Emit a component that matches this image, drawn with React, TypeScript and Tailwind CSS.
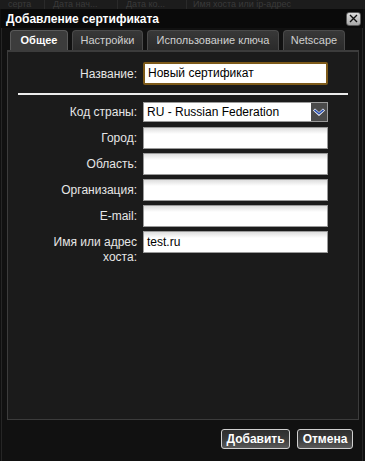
import React from 'react';

const font = { fontFamily: '"Liberation Sans", Arial, sans-serif' };

const inputClass =
  'h-[22px] w-[185px] border border-[#9a9a9a] bg-linear-to-b from-[#dedede] via-white via-[30%] to-white px-[3px] text-[12px] leading-[20px] text-black';

function Field({ label, value = '' }: { label: string; value?: string }) {
  return (
    <div className="flex items-center gap-[6px]">
      <span className="w-[117px] text-right text-[12px] text-[#e6e6e6]">{label}</span>
      <div className={inputClass}>{value}</div>
    </div>
  );
}

function Chevron() {
  return (
    <svg width="12" height="8" viewBox="0 0 12 8">
      <path d="M1 1.5 L6 6 L11 1.5" fill="none" stroke="#ffffff" strokeWidth="3" strokeLinejoin="miter" />
      <path d="M1.5 1.8 L6 5.8 L10.5 1.8" fill="none" stroke="#2a4fb0" strokeWidth="1.6" />
    </svg>
  );
}

export default function App() {
  const tabs = [
    { name: 'Общее', w: 'w-[58px]', active: true },
    { name: 'Настройки', w: 'w-[71px]' },
    { name: 'Использование ключа', w: 'w-[132px]' },
    { name: 'Netscape', w: 'w-[62px]' },
  ];

  return (
    <div className="relative w-[365px] h-[461px] overflow-hidden bg-[#101010]" style={font}>
      {/* table header behind the dialog */}
      <div className="absolute inset-x-0 top-0 flex h-[9px] overflow-hidden bg-[#1c1c1c] text-[9px] leading-[9px] text-[#3a3a3a]">
        <div className="w-[45px] border-r border-[#2a2a2a] pl-[8px]">серта</div>
        <div className="w-[73px] border-r border-[#2a2a2a] pl-[8px]">Дата нач...</div>
        <div className="w-[69px] border-r border-[#2a2a2a] pl-[8px]">Дата ко...</div>
        <div className="flex-1 pl-[6px]">Имя хоста или ip-адрес</div>
      </div>

      <div className="relative ml-[1px] flex h-full w-[362px] flex-col pt-[9px]">
        {/* title bar */}
        <div className="flex h-[19px] items-center justify-between bg-[#0a0a0a] pl-[5px] pr-[2px]">
          <span className="text-[12px] font-bold text-white">Добавление сертификата</span>
          <div className="flex h-[14px] w-[15px] items-center justify-center rounded-[3px] border border-[#5a5a5a] bg-linear-to-b from-[#dcdcdc] to-[#a8a8a8]">
            <svg width="9" height="9" viewBox="0 0 9 9">
              <path d="M1 1 L8 8 M8 1 L1 8" stroke="#111" strokeWidth="1.4" />
            </svg>
          </div>
        </div>

        {/* body */}
        <div className="flex flex-1 flex-col border-x border-[#262626] bg-[#111] pl-[5px] pt-[2px]">
          <div className="flex h-[20px] items-end gap-[4px] pl-[3px]">
            {tabs.map((t) => (
              <div
                key={t.name}
                className={`${t.w} flex h-[20px] items-center justify-center whitespace-nowrap rounded-t-[4px] border border-b-0 text-[11px] ${
                  t.active
                    ? 'border-[#5a5a5a] bg-[#3c3c3c] font-bold text-white'
                    : 'border-[#4a4a4a] bg-linear-to-b from-[#383838] to-[#2a2a2a] text-[#cfcfcf]'
                }`}
              >
                {t.name}
              </div>
            ))}
          </div>

          {/* panel */}
          <div className="flex h-[370px] w-[352px] flex-col border border-t-2 border-[#3c3c3c] bg-[#1b1b1b] pl-[12px] pt-[10px]">
            <div className="flex items-center gap-[6px]">
              <span className="w-[117px] text-right text-[12px] text-[#e6e6e6]">Название:</span>
              <div className="h-[23px] w-[185px] rounded-[2px] border-2 border-[#7d5a1a] bg-white px-[3px] text-[12px] leading-[19px] text-black">
                Новый сертификат
              </div>
            </div>

            <div className="-ml-[2px] mt-[8px] mb-[7px] h-[2px] w-[330px] bg-[#ececec]" />

            <div className="flex items-center gap-[6px]">
              <span className="w-[117px] text-right text-[12px] text-[#e6e6e6]">Код страны:</span>
              <div className="flex h-[20px] w-[185px] border border-[#9a9a9a] bg-white">
                <span className="flex-1 px-[3px] text-[12px] leading-[18px] text-black">RU - Russian Federation</span>
                <div className="flex w-[16px] items-center justify-center bg-[#4a4a4a]">
                  <Chevron />
                </div>
              </div>
            </div>

            <div className="mt-[5px] flex flex-col gap-[4px]">
              <Field label="Город:" />
              <Field label="Область:" />
              <Field label="Организация:" />
              <Field label="E-mail:" />
              <div className="flex items-start gap-[6px]">
                <span className="w-[117px] pt-[4px] text-right text-[12px] leading-[15px] text-[#e6e6e6]">
                  Имя или адрес
                  <br />
                  хоста:
                </span>
                <div className={inputClass}>test.ru</div>
              </div>
            </div>
          </div>

          {/* buttons */}
          <div className="mt-[9px] flex w-[352px] justify-end gap-[7px] pr-[6px]">
            <button className="h-[20px] w-[69px] rounded-[3px] border border-[#d0d0d0] bg-linear-to-b from-[#2e2e2e] via-[#3a3a3a] to-[#5a5a5a] text-[12px] font-bold text-white">
              Добавить
            </button>
            <button className="h-[20px] w-[56px] rounded-[3px] border border-[#d0d0d0] bg-linear-to-b from-[#2e2e2e] via-[#3a3a3a] to-[#5a5a5a] text-[12px] font-bold text-white">
              Отмена
            </button>
          </div>
        </div>
      </div>
    </div>
  );
}
